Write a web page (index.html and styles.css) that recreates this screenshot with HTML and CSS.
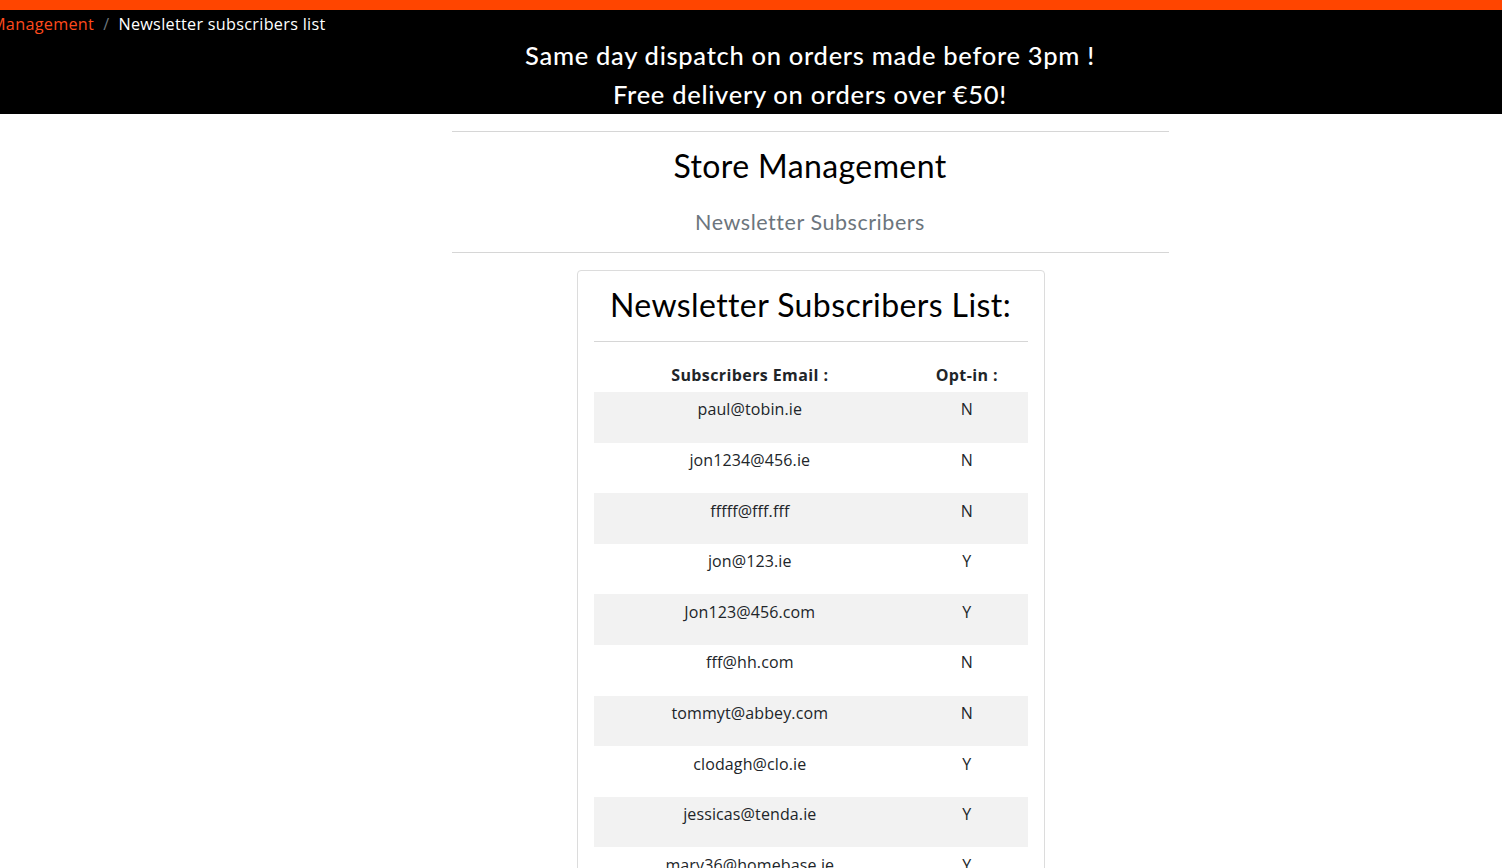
FILE: index.html
```html
<!DOCTYPE html>
<html lang="en">
<head>
<meta charset="utf-8">
<title>Newsletter subscribers list</title>
<link rel="stylesheet" href="styles.css">
</head>
<body>
<div class="page">
  <div class="promo-strip"></div>
  <header class="topbar">
    <nav class="crumbs">
      <a class="crumb-link" href="#">Management</a>
      <span class="crumb-sep">/</span>
      <span class="crumb-current">Newsletter subscribers list</span>
    </nav>
    <p class="announce">Same day dispatch on orders made before 3pm !</p>
    <p class="announce">Free delivery on orders over €50!</p>
  </header>

  <main class="container">
    <hr class="rule rule-top">
    <h2 class="page-title">Store Management</h2>
    <h5 class="page-sub">Newsletter Subscribers</h5>
    <hr class="rule rule-bottom">

    <section class="card">
      <h2 class="card-title">Newsletter Subscribers List:</h2>
      <hr class="rule card-rule">
      <table class="subs">
        <thead>
          <tr><th class="col-email">Subscribers Email :</th><th class="col-opt">Opt-in :</th></tr>
        </thead>
        <tbody>
          <tr><td><p>paul@tobin.ie</p></td><td><p>N</p></td></tr>
          <tr><td><p>jon1234@456.ie</p></td><td><p>N</p></td></tr>
          <tr><td><p>fffff@fff.fff</p></td><td><p>N</p></td></tr>
          <tr><td><p>jon@123.ie</p></td><td><p>Y</p></td></tr>
          <tr><td><p>Jon123@456.com</p></td><td><p>Y</p></td></tr>
          <tr><td><p>fff@hh.com</p></td><td><p>N</p></td></tr>
          <tr><td><p>tommyt@abbey.com</p></td><td><p>N</p></td></tr>
          <tr><td><p>clodagh@clo.ie</p></td><td><p>Y</p></td></tr>
          <tr><td><p>jessicas@tenda.ie</p></td><td><p>Y</p></td></tr>
          <tr><td><p>mary36@homebase.ie</p></td><td><p>Y</p></td></tr>
        </tbody>
      </table>
    </section>
  </main>
</div>
</body>
</html>
```

FILE: styles.css
```css
html, body {
  margin: 0;
  padding: 0;
  overflow-x: hidden;
  background: #fff;
}
body {
  font-family: "Open Sans", "Liberation Sans", sans-serif;
  font-size: 16px;
  line-height: 1.5;
  color: #212529;
}
.page {
  width: 1620px;
}
.promo-strip {
  height: 10px;
  background: #ff4500;
}
.topbar {
  background: #000;
  color: #fff;
  height: 104px;
  box-sizing: border-box;
}
.crumbs {
  height: 26px;
  line-height: 28px;
  margin-left: -9px;
  font-size: 16.2px;
  letter-spacing: 0.3px;
  display: flex;
}
.crumb-link {
  color: #ff4a1c;
  text-decoration: none;
}
.crumb-sep {
  color: #6c757d;
  padding: 0 9px 0 9px;
}
.crumb-current {
  color: #fff;
}
.announce {
  margin: 0;
  text-align: center;
  font-family: "Lato", "Noto Sans", sans-serif;
  font-size: 25.5px;
  font-weight: 500;
  line-height: 38.5px;
  letter-spacing: 0.7px;
}
.container {
  width: 717px;
  margin: 0 auto;
  text-align: center;
}
.rule {
  border: 0;
  border-top: 1px solid #d6d6d6;
  margin: 16px 0;
}
.rule-top {
  margin-top: 17px;
  margin-bottom: 15px;
}
.page-title {
  font-family: "Lato", "Noto Sans", sans-serif;
  font-weight: 400;
  font-size: 32px;
  line-height: 38px;
  margin: 0 0 25px;
  letter-spacing: 0.4px;
  color: #000;
}
.page-sub {
  font-family: "Lato", "Noto Sans", sans-serif;
  font-weight: 400;
  font-size: 21.5px;
  line-height: 24px;
  letter-spacing: 0.55px;
  color: #6c757d;
  margin: 0;
}
.rule-bottom {
  margin-top: 18px;
  margin-bottom: 17px;
}
.card {
  width: 468px;
  box-sizing: border-box;
  margin: 0 0 0 125px;
  border: 1px solid #dcdcdc;
  border-radius: 4px;
  padding: 14px 16px 16px;
}
.card-title {
  font-family: "Lato", "Noto Sans", sans-serif;
  font-weight: 400;
  font-size: 32px;
  line-height: 40px;
  letter-spacing: 0.4px;
  margin: 0;
  color: #000;
}
.card-rule {
  margin: 16px 0 15px;
}
.subs {
  width: 100%;
  border-collapse: collapse;
}
.subs th, .subs td {
  padding: 4.8px;
  border-top: 1px solid transparent;
  text-align: center;
  vertical-align: top;
}
.subs td {
  letter-spacing: 0.12px;
}
.subs th {
  font-weight: 700;
  letter-spacing: 0.4px;
}
.col-email {
  width: 303px;
}
.subs td p {
  margin: 0 0 16px;
}
.subs tbody tr:nth-child(odd) {
  background: #f2f2f2;
}
```
